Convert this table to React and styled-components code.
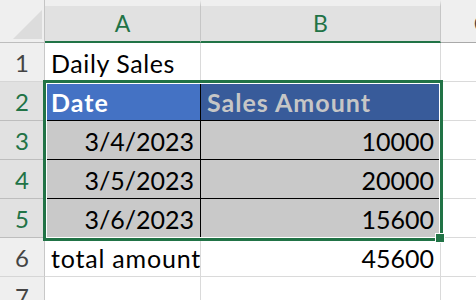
import React from "react";
import styled, { createGlobalStyle } from "styled-components";

const GREEN = "#217346";

const GlobalStyle = createGlobalStyle`
  html, body {
    margin: 0;
    padding: 0;
    background: #fff;
    overflow: hidden;
  }
  body {
    font-family: Lato, "Open Sans", sans-serif;
  }
`;

const Sheet = styled.div`
  position: relative;
  display: grid;
  grid-template-columns: 45px 156px 240px 82px;
  grid-template-rows: 43px repeat(7, 39px);
  width: 523px;
  background: #fff;
`;

const Corner = styled.div`
  box-sizing: border-box;
  display: flex;
  justify-content: flex-end;
  align-items: flex-end;
  padding: 0 2px 3px 0;
  background: #efefef;
  border-right: 1px solid #c4c4c4;
  border-bottom: 1px solid #bdbdbd;
`;

const ColHeader = styled.div`
  box-sizing: border-box;
  background: ${(p) => (p.$selected ? "#e1e1e1" : "#efefef")};
  border-top: 6px solid #efefef;
  border-right: 1px solid ${(p) => (p.$selected ? "#c6c6c6" : "#d0d0d0")};
  border-bottom: ${(p) => (p.$selected ? `2px solid ${GREEN}` : "1px solid #a9a9a9")};
  color: ${(p) => (p.$selected ? GREEN : "#444")};
  font-size: 23px;
  line-height: 35px;
  text-align: center;
  white-space: nowrap;
  overflow: hidden;
`;

const RowHeader = styled.div`
  box-sizing: border-box;
  background: ${(p) => (p.$selected ? "#e1e1e1" : "#efefef")};
  border-right: 1px solid #c8c8c8;
  border-bottom: 1px solid ${(p) => (p.$selected ? "#bdbdbd" : "#d6d6d6")};
  color: ${(p) => (p.$selected ? GREEN : "#444")};
  font-size: 24px;
  padding-top: 2px;
  line-height: 36px;
  text-align: center;
`;

const Cell = styled.div`
  box-sizing: border-box;
  background: ${(p) => p.$fill || "#fff"};
  border-right: 1px solid ${(p) => p.$line || "#dadada"};
  border-bottom: 1px solid ${(p) => p.$line || "#dadada"};
  color: ${(p) => p.$color || "#000"};
  font-weight: ${(p) => (p.$bold ? 700 : 400)};
  text-align: ${(p) => p.$align || "left"};
  letter-spacing: ${(p) => p.$track || 0}px;
  font-size: 25px;
  padding: 2px 6px 0 6px;
  line-height: 36px;
  white-space: nowrap;
  overflow: hidden;
`;

const Selection = styled.div`
  position: absolute;
  left: 43px;
  top: 80px;
  width: 400px;
  height: 161px;
  box-sizing: border-box;
  border: 3px solid ${GREEN};
  box-shadow: inset 0 0 0 1px #fff;
  pointer-events: none;
`;

const FillHandle = styled.div`
  position: absolute;
  left: 435px;
  top: 233px;
  width: 10px;
  height: 10px;
  box-sizing: border-box;
  background: ${GREEN};
  border: 1px solid #fff;
  pointer-events: none;
`;

const HEAD = "#4472c4";
const HEAD_DARK = "#385b9a";
const BODY = "#c9c9c9";

const rows = [
  { n: 1, a: { text: "Daily Sales", track: 0.6 }, b: { text: "" } },
  {
    n: 2,
    sel: true,
    a: { text: "Date", fill: HEAD, color: "#fff", bold: true, line: "#000", track: 1 },
    b: { text: "Sales Amount", fill: HEAD_DARK, color: "#c6c6c6", bold: true, line: "#000", track: 1 },
  },
  {
    n: 3,
    sel: true,
    a: { text: "3/4/2023", fill: BODY, align: "right", line: "#000" },
    b: { text: "10000", fill: BODY, align: "right", line: "#000" },
  },
  {
    n: 4,
    sel: true,
    a: { text: "3/5/2023", fill: BODY, align: "right", line: "#000" },
    b: { text: "20000", fill: BODY, align: "right", line: "#000" },
  },
  {
    n: 5,
    sel: true,
    a: { text: "3/6/2023", fill: BODY, align: "right", line: "#000" },
    b: { text: "15600", fill: BODY, align: "right", line: "#000" },
  },
  { n: 6, a: { text: "total amount", track: 0.8 }, b: { text: "45600", align: "right" } },
  { n: 7, a: { text: "" }, b: { text: "" } },
];

function DataCell({ cell }) {
  return (
    <Cell
      $fill={cell.fill}
      $color={cell.color}
      $bold={cell.bold}
      $align={cell.align}
      $line={cell.line}
      $track={cell.track}
    >
      {cell.text}
    </Cell>
  );
}

export default function App() {
  return (
    <>
      <GlobalStyle />
      <Sheet>
        <Corner>
          <svg width="29" height="29" viewBox="0 0 29 29">
            <polygon points="29,0 29,29 0,29" fill="#dcdcdc" />
          </svg>
        </Corner>
        <ColHeader $selected>A</ColHeader>
        <ColHeader $selected>B</ColHeader>
        <ColHeader>C</ColHeader>

        {rows.map((r) => (
          <React.Fragment key={r.n}>
            <RowHeader $selected={r.sel}>{r.n}</RowHeader>
            <DataCell cell={r.a} />
            <DataCell cell={r.b} />
            <Cell />
          </React.Fragment>
        ))}

        <Selection />
        <FillHandle />
      </Sheet>
    </>
  );
}
